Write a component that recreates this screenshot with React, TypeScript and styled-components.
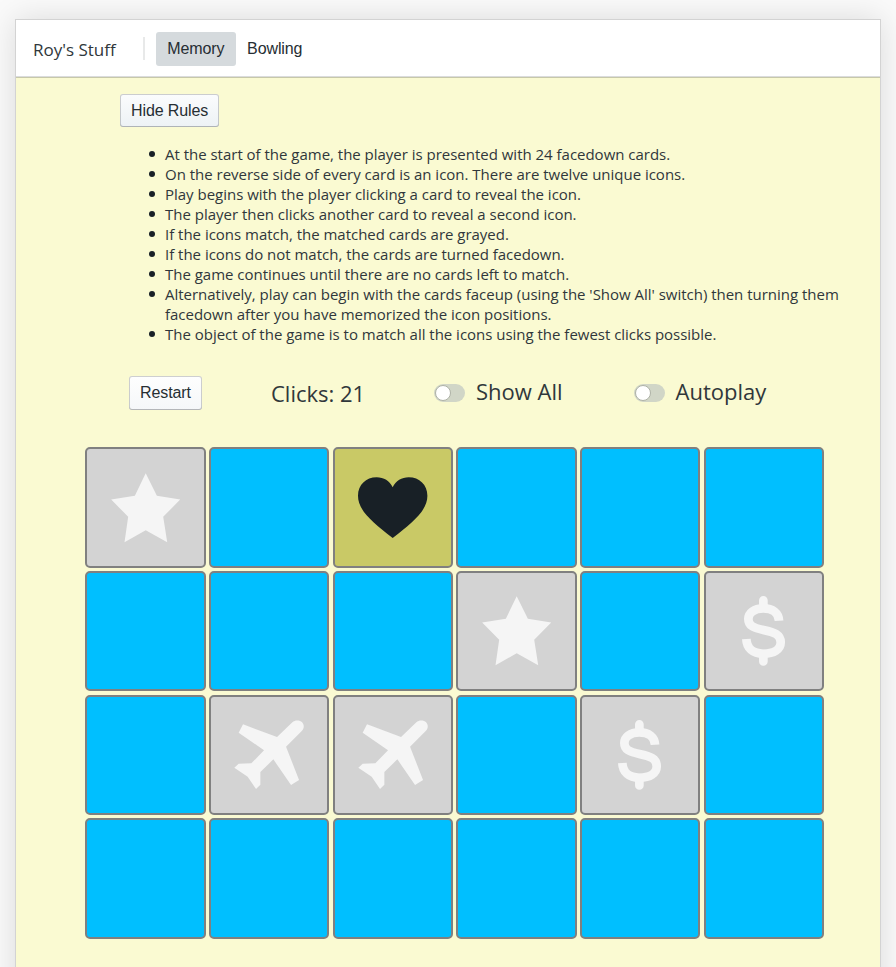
import React, { useState } from 'react';
import styled, { createGlobalStyle } from 'styled-components';

const GlobalStyle = createGlobalStyle`
  * { box-sizing: border-box; }
  html, body { margin: 0; height: 100%; }
  body {
    background: #fafafa;
    color: #30373b;
    font-family: 'Open Sans', 'Noto Sans', sans-serif;
    overflow: hidden;
  }
`;

const Page = styled.div`
  height: 100vh;
  padding: 19px 15px 0;
  overflow: hidden;
`;

const Panel = styled.main`
  height: 1100px;
  border: 1px solid #d3d3d3;
  background: #fafad2;
  box-shadow: 0 0 30px rgba(0, 0, 0, 0.13);
`;

const NavBar = styled.nav`
  display: flex;
  align-items: center;
  height: 57px;
  padding-left: 17px;
  background: #fff;
  box-shadow: inset 0 -1px 0 rgba(16, 22, 26, 0.15), 0 1px 0 rgba(16, 22, 26, 0.22);
`;

const Brand = styled.div`
  width: 110px;
  padding-top: 1px;
  font-size: 17px;
  white-space: nowrap;
`;

const Divider = styled.span`
  width: 2px;
  height: 23px;
  margin-right: 11px;
  background: #e8e9e9;
`;

const NavButton = styled.button<{ $active?: boolean }>`
  height: 34px;
  padding: 0 11.3px;
  border: 0;
  border-radius: 3px;
  background: ${({ $active }) => ($active ? '#d5dadd' : 'transparent')};
  color: #262e33;
  font: 16px 'Liberation Sans', Arial, sans-serif;
  letter-spacing: -0.1px;
`;

const Button = styled.button`
  height: 33px;
  padding: 0 11px;
  border: 0;
  border-radius: 3px;
  background: linear-gradient(#fbfcfd, #edf2f5);
  box-shadow: inset 0 0 0 1px rgba(16, 22, 26, 0.2), inset 0 -1px 0 rgba(16, 22, 26, 0.1);
  color: #262e33;
  font: 16px 'Liberation Sans', Arial, sans-serif;
  letter-spacing: -0.1px;
  white-space: nowrap;
`;

const RulesSection = styled.section`
  padding: 17px 0 0 104px;
`;

const Rules = styled.ul`
  margin: 17px 20px 0 0;
  padding-left: 45px;
  list-style: none;
  font-size: 15px;
  line-height: 20px;
  letter-spacing: -0.015px;
`;

const Rule = styled.li`
  white-space: pre-line;

  &::before {
    content: '';
    display: inline-block;
    width: 6px;
    height: 6px;
    margin: 0 10px 3px -16px;
    border-radius: 50%;
    background: #182026;
  }
`;

const Controls = styled.div`
  display: grid;
  grid-template-columns: 142px 163px 199.5px 150px;
  align-items: center;
  height: 34px;
  margin: 32px 0 0 113px;
  font-size: 22px;
`;

const RestartButton = styled(Button)`
  justify-self: start;
  height: 34px;
  background: linear-gradient(#fefefe, #f5f7f9);
`;

const Clicks = styled.div`
  margin-top: -1px;
`;

const Switch = styled.label`
  display: flex;
  align-items: center;
  gap: 11px;
  white-space: nowrap;
`;

const SwitchText = styled.span`
  margin-top: -4px;
`;

const Track = styled.span<{ $on: boolean }>`
  display: flex;
  justify-content: ${({ $on }) => ($on ? 'flex-end' : 'flex-start')};
  width: 31px;
  height: 18px;
  margin-top: -1px;
  padding: 1px;
  border-radius: 9px;
  background: ${({ $on }) => ($on ? '#137cbd' : '#d1d6c7')};
`;

const Knob = styled.span`
  width: 16px;
  height: 16px;
  border: 1px solid #aeb2a6;
  border-radius: 50%;
  background: #fff;
`;

const HiddenCheckbox = styled.input`
  display: none;
`;

const Board = styled.div`
  display: grid;
  grid-template-columns: repeat(6, 120.4px);
  grid-auto-rows: 120.4px;
  gap: 3.3px;
  margin: 37.3px 0 0 69.2px;
`;

type CardState = 'down' | 'up' | 'matched';

const cardColors: Record<CardState, string> = {
  down: '#00bfff',
  up: '#c9c966',
  matched: '#d3d3d3',
};

const CardFace = styled.div<{ $state: CardState }>`
  display: flex;
  align-items: center;
  justify-content: center;
  border: 2px solid #808080;
  border-radius: 5px;
  background: ${({ $state }) => cardColors[$state]};
  color: ${({ $state }) => ($state === 'matched' ? '#f5f5f5' : '#182026')};
`;

const Glyph = styled.svg`
  width: 69.4px;
  height: 69.4px;
  fill: currentColor;
  overflow: visible;
`;

type IconName = 'star' | 'heart' | 'dollar' | 'plane';

const icons: Record<IconName, { box: string; shape: React.ReactNode }> = {
  star: {
    box: '92.5 98.5 208 208',
    shape: <path d="M196.5 99 230 167 300 178 249 230 261 306 196.5 270 133 306 144 230 93 178 164 167Z" />,
  },
  heart: {
    box: '91 98 208 208',
    shape: (
      <path d="M195 141C204 121 222 111 243 111C275 111 299 134 299 166C299 211 255 246 195 293C135 246 91 211 91 166C91 134 115 111 147 111C168 111 186 121 195 141Z" />
    ),
  },
  dollar: {
    box: '89 94 208 208',
    shape: (
      <g fill="none" stroke="currentColor" strokeWidth="26">
        <path d="M192 107V128M192 268V290" strokeLinecap="round" />
        <path d="M239 168C238 145 220 131 192 131C164 131 147 145 147 163C147 182 160 189 192 196C226 203 244 210 244 233C244 254 224 267 192 267C160 267 142 250 141 223" />
      </g>
    ),
  },
  plane: {
    box: '91 91 208 208',
    shape: (
      <path d="M118 104 220 142 266 98C273 91 288 90 295 98C302 106 302 116 294 124L247 171 286 271 262 286 209 209 170 247V285L157 298 132 261 92 234 105 222 143 221 181 182 105 129Z" />
    ),
  },
};

const rules = [
  'At the start of the game, the player is presented with 24 facedown cards.',
  'On the reverse side of every card is an icon. There are twelve unique icons.',
  'Play begins with the player clicking a card to reveal the icon.',
  'The player then clicks another card to reveal a second icon.',
  'If the icons match, the matched cards are grayed.',
  'If the icons do not match, the cards are turned facedown.',
  'The game continues until there are no cards left to match.',
  "Alternatively, play can begin with the cards faceup (using the 'Show All' switch) then turning them\nfacedown after you have memorized the icon positions.",
  'The object of the game is to match all the icons using the fewest clicks possible.',
];

const revealed: Record<number, { icon: IconName; state: CardState }> = {
  0: { icon: 'star', state: 'matched' },
  2: { icon: 'heart', state: 'up' },
  9: { icon: 'star', state: 'matched' },
  11: { icon: 'dollar', state: 'matched' },
  13: { icon: 'plane', state: 'matched' },
  14: { icon: 'plane', state: 'matched' },
  16: { icon: 'dollar', state: 'matched' },
};

function Toggle({ label }: { label: string }) {
  const [on, setOn] = useState(false);
  return (
    <Switch>
      <HiddenCheckbox type="checkbox" checked={on} onChange={() => setOn(!on)} />
      <Track $on={on}>
        <Knob />
      </Track>
      <SwitchText>{label}</SwitchText>
    </Switch>
  );
}

function Card({ index }: { index: number }) {
  const card = revealed[index];
  return (
    <CardFace $state={card ? card.state : 'down'}>
      {card && <Glyph viewBox={icons[card.icon].box}>{icons[card.icon].shape}</Glyph>}
    </CardFace>
  );
}

export default function App() {
  return (
    <>
      <GlobalStyle />
      <Page>
        <Panel>
          <NavBar>
            <Brand>Roy's Stuff</Brand>
            <Divider />
            <NavButton $active>Memory</NavButton>
            <NavButton>Bowling</NavButton>
          </NavBar>
          <RulesSection>
            <Button>Hide Rules</Button>
            <Rules>
              {rules.map((rule) => (
                <Rule key={rule}>{rule}</Rule>
              ))}
            </Rules>
          </RulesSection>
          <Controls>
            <RestartButton>Restart</RestartButton>
            <Clicks>Clicks: 21</Clicks>
            <Toggle label="Show All" />
            <Toggle label="Autoplay" />
          </Controls>
          <Board>
            {Array.from({ length: 24 }, (_, index) => (
              <Card key={index} index={index} />
            ))}
          </Board>
        </Panel>
      </Page>
    </>
  );
}
